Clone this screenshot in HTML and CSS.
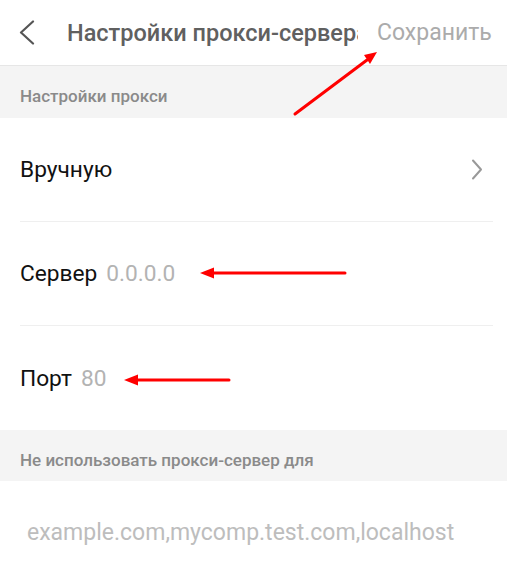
FILE: index.html
```html
<!DOCTYPE html>
<html lang="ru">
<head>
<meta charset="utf-8">
<link rel="stylesheet" href="styles.css">
</head>
<body>
<div class="page">
  <header class="topbar">
    <svg class="back" width="18" height="26" viewBox="0 0 18 26"><path d="M15 1.5 L3 12.5 L15 23.5" fill="none" stroke="#555" stroke-width="2.2" stroke-linecap="round" stroke-linejoin="round"/></svg>
    <div class="title">Настройки прокси-сервера</div>
    <div class="save">Сохранить</div>
  </header>
  <div class="section">Настройки прокси</div>
  <div class="list">
    <div class="row">
      <span class="label">Вручную</span>
      <svg class="chev" width="12" height="21" viewBox="0 0 12 21"><path d="M2 1.5 L10 10.5 L2 19.5" fill="none" stroke="#999" stroke-width="2" stroke-linecap="round" stroke-linejoin="round"/></svg>
    </div>
    <div class="row">
      <span class="label">Сервер</span><span class="ph">0.0.0.0</span>
    </div>
    <div class="row">
      <span class="label">Порт</span><span class="ph">80</span>
    </div>
  </div>
  <div class="section section2">Не использовать прокси-сервер для</div>
  <div class="bypass">example.com,mycomp.test.com,localhost</div>

  <svg class="arrows" width="507" height="576" viewBox="0 0 507 576">
    <g stroke="#ff0000" stroke-width="3" stroke-linecap="round" fill="#ff0000">
      <line x1="295" y1="114" x2="367" y2="60"/>
      <line x1="345" y1="273" x2="212" y2="273"/>
      <line x1="229" y1="380" x2="136" y2="380"/>
    </g>
    <g fill="#ff0000">
      <polygon points="377,52 364,55 370,64"/>
      <polygon points="200,273 214,267.5 214,278.5"/>
      <polygon points="124,380 138,374.5 138,385.5"/>
    </g>
  </svg>
</div>
</body>
</html>
```
FILE: styles.css
```css
html, body {
  margin: 0;
  padding: 0;
  background: #ffffff;
}
body {
  font-family: Roboto, "Noto Sans", "Liberation Sans", sans-serif;
}
.page {
  position: relative;
  width: 507px;
  height: 576px;
  overflow: hidden;
}
.topbar {
  height: 65px;
  border-bottom: 1px solid #e6e6e6;
  display: flex;
  align-items: center;
  padding-left: 18px;
  box-sizing: content-box;
}
.back {
  flex: none;
}
.title {
  margin-left: 31px;
  width: 291px;
  flex: none;
  white-space: nowrap;
  overflow: hidden;
  font-size: 23.5px;
  font-weight: 500;
  color: #606060;
}
.save {
  margin-left: 19px;
  font-size: 23px;
  color: #ababab;
  white-space: nowrap;
}
.section {
  height: 52px;
  background: #f4f4f4;
  display: flex;
  align-items: center;
  padding-left: 20px;
  padding-top: 8px;
  box-sizing: border-box;
  font-size: 17px;
  font-weight: 500;
  color: #8a8a8a;
}
.section2 {
  height: 51px;
}
.list {
  padding: 0 14px 0 20px;
}
.row {
  height: 103px;
  display: flex;
  align-items: center;
  border-bottom: 1px solid #efefef;
  font-size: 22.7px;
}
.row:last-child {
  border-bottom: none;
  height: 104px;
}
.label {
  color: #111111;
}
.ph {
  color: #b3b3b3;
  margin-left: 9px;
}
.chev {
  margin-left: auto;
  margin-right: 10px;
}
.bypass {
  height: 95px;
  display: flex;
  align-items: center;
  padding-left: 27px;
  font-size: 23px;
  color: #bdbdbd;
  padding-top: 8px;
  box-sizing: border-box;
}
.arrows {
  position: absolute;
  left: 0;
  top: 0;
  pointer-events: none;
}
```
